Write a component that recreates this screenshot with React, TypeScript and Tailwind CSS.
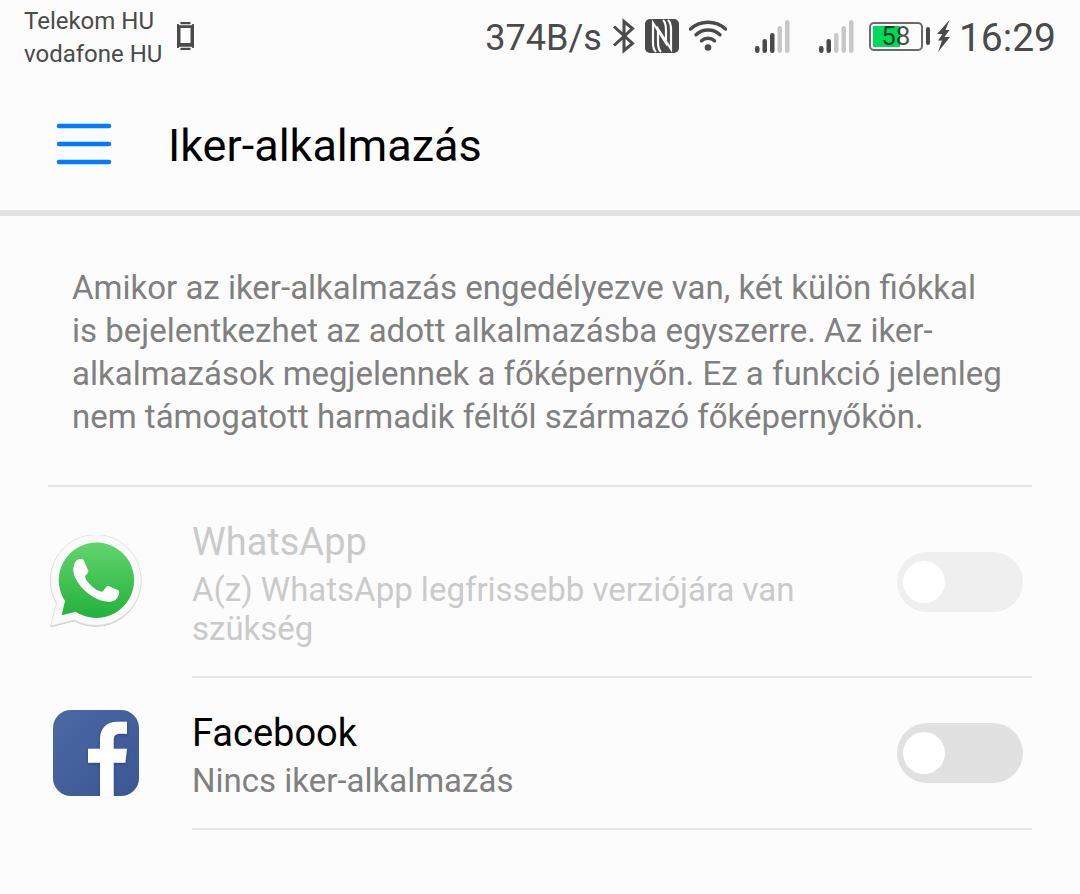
import React, { useState } from "react";

interface TwinApp {
  id: string;
  name: string;
  status: string;
  available: boolean;
  icon: React.ReactNode;
}

function PhoneIcon() {
  return (
    <svg width="17" height="28" viewBox="0 0 17 28" fill="#4a4a4a">
      <path d="M3.500 0h10v2.300h-10zM3.500 25.700h10V28h-10z" />
      <path
        fillRule="evenodd"
        d="M0 2h1.500l1 1.200h12l1-1.200H17v24h-1.500l-1-1.200h-12L1.500 26H0zM3.500 6v15h10V6z"
      />
    </svg>
  );
}

function BluetoothIcon() {
  return (
    <svg width="24" height="36" viewBox="0 0 24 36" fill="none" stroke="#4a4a4a" strokeWidth="3">
      <path d="M2 8.500l18.500 17-8.500 7V3.500l8.500 7L2 27.500" />
    </svg>
  );
}

function NfcIcon() {
  return (
    <svg width="34" height="34" viewBox="0 0 34 34">
      <rect width="34" height="34" rx="5" fill="#4a4a4a" />
      <g fill="none" stroke="#fcfcfc" strokeWidth="2.200">
        <path d="M11 33C9 31 8 28.500 8 24V4l13 20V11c0-5-.8-8-3-10" />
        <path d="M23 1c2 2 3 4.500 3 9v20L13 10v13c0 5 .8 8 3 10" />
      </g>
    </svg>
  );
}

function WifiIcon() {
  return (
    <svg width="40" height="34" viewBox="0 0 40 34" fill="none" stroke="#4a4a4a" strokeWidth="3.400" strokeLinecap="round">
      <path d="M2.500 10a26 26 0 0 1 35 0" />
      <path d="M8 15.800a17.500 17.500 0 0 1 24 0" />
      <path d="M13.500 21.800a9.500 9.500 0 0 1 13 0" />
      <circle cx="20" cy="28.500" r="3.300" fill="#4a4a4a" stroke="none" />
    </svg>
  );
}

const signalBars = [
  { x: 0, y: 26 },
  { x: 7.5, y: 19 },
  { x: 15, y: 13 },
  { x: 22.5, y: 6 },
  { x: 30, y: 0 },
];

function SignalIcon({ level }: { level: number }) {
  return (
    <svg width="35" height="33" viewBox="0 0 35 33">
      {signalBars.map((bar, i) => (
        <rect
          key={bar.x}
          x={bar.x}
          y={bar.y}
          width="4.500"
          height={33 - bar.y}
          rx="2.200"
          fill={i < level ? "#4a4a4a" : "#c8c8c8"}
        />
      ))}
    </svg>
  );
}

function Battery({ percent }: { percent: number }) {
  return (
    <div className="flex items-center gap-[3px]">
      <div className="relative h-[29px] w-[54px] rounded-[5px] border-2 border-[#6a6a6a] p-[2px]">
        <div className="h-full bg-[#00d95a]" style={{ width: `${percent}%` }} />
        <span className="absolute inset-0 flex items-center justify-center text-[26px] leading-none text-black/70">
          {percent}
        </span>
      </div>
      <div className="h-[18px] w-1 rounded-full bg-[#4a4a4a]" />
    </div>
  );
}

function BoltIcon() {
  return (
    <svg width="13" height="32" viewBox="0 0 13 32" fill="#4a4a4a">
      <path d="M12.500 0L0 14h5.500L1 20.500h4L1 32 13 17H7.500L12.500 10H8.500z" />
    </svg>
  );
}

function WhatsAppIcon() {
  return (
    <svg className="size-24" viewBox="24 45 288 288">
      <defs>
        <linearGradient id="wa-fill" x1="0" y1="0" x2="0" y2="1">
          <stop offset="0" stopColor="#63d46e" />
          <stop offset="1" stopColor="#23b13c" />
        </linearGradient>
        <filter id="wa-shadow" x="-10%" y="-10%" width="120%" height="120%">
          <feDropShadow dx="0" dy="2" stdDeviation="2" floodColor="#000" floodOpacity="0.35" />
        </filter>
      </defs>
      <path
        d="M32 318L50 249A136 136 0 1 1 103 300Z"
        fill="#fafafa"
        stroke="#d4d4d4"
        strokeWidth="1.500"
        filter="url(#wa-shadow)"
      />
      <path d="M65 286L75 243A113 113 0 1 1 107 275Z" fill="url(#wa-fill)" />
      <path
        d="M110 121c5-5 18-5 21-1l14 32c2 5-10 14-10 18 3 14 30 42 50 45 6 0 13-18 19-18l31 14c7 5-1 23-8 28-18 12-43 5-67-8-30-17-57-50-60-77-1-12 3-26 10-33z"
        fill="#fff"
      />
    </svg>
  );
}

function FacebookIcon() {
  return (
    <svg className="size-24" viewBox="24 33 288 288">
      <defs>
        <linearGradient id="fb-fill" x1="0" y1="0" x2="1" y2="1">
          <stop offset="0" stopColor="#4c69a4" />
          <stop offset="1" stopColor="#3a5795" />
        </linearGradient>
        <clipPath id="fb-clip">
          <rect x="39" y="45" width="258" height="258" rx="54" />
        </clipPath>
        <filter id="fb-shadow" x="-20%" y="-20%" width="140%" height="140%">
          <feDropShadow dx="0" dy="4" stdDeviation="4" floodColor="#1d3468" floodOpacity="0.6" />
        </filter>
      </defs>
      <g clipPath="url(#fb-clip)">
        <rect x="39" y="45" width="258" height="258" fill="url(#fb-fill)" />
        <path
          d="M180 310V203h-36v-42h36v-27c0-35 20-54 51-54h30v36h-21c-15 0-19 8-19 20v25h40l-5 42h-35v107z"
          fill="#fff"
          filter="url(#fb-shadow)"
        />
      </g>
    </svg>
  );
}

const apps: TwinApp[] = [
  {
    id: "whatsapp",
    name: "WhatsApp",
    status: "A(z) WhatsApp legfrissebb verziójára van szükség",
    available: false,
    icon: <WhatsAppIcon />,
  },
  {
    id: "facebook",
    name: "Facebook",
    status: "Nincs iker-alkalmazás",
    available: true,
    icon: <FacebookIcon />,
  },
];

function StatusBar() {
  return (
    <div className="flex h-[72px] items-center justify-between px-6 text-[#4a4a4a]">
      <div className="flex items-center gap-[15px]">
        <div className="pt-1 text-[24px] leading-[33px]">
          <p>Telekom HU</p>
          <p>vodafone HU</p>
        </div>
        <PhoneIcon />
      </div>

      <div className="flex items-center">
        <span className="mr-2.5 pt-1 text-[36px] leading-none">374B/s</span>
        <div className="mr-[27px] flex items-center gap-[9px]">
          <BluetoothIcon />
          <NfcIcon />
          <WifiIcon />
        </div>
        <div className="mr-[15px] flex items-center gap-[29px]">
          <SignalIcon level={3} />
          <SignalIcon level={2} />
        </div>
        <div className="flex items-center gap-[7px]">
          <Battery percent={58} />
          <BoltIcon />
        </div>
        <span className="ml-[9px] pt-1 text-[39px] leading-none">16:29</span>
      </div>
    </div>
  );
}

export default function App() {
  const [enabled, setEnabled] = useState<Record<string, boolean>>({});

  function toggle(id: string) {
    setEnabled((prev) => ({ ...prev, [id]: !prev[id] }));
  }

  return (
    <div className="min-h-screen bg-[#fcfcfc] font-[Roboto,sans-serif]">
      <StatusBar />

      <header className="flex h-36 items-center gap-14 border-b-6 border-[#e1e1e1] px-14 pt-1.5">
        <button type="button" aria-label="Menü">
          <svg width="56" height="42" viewBox="0 0 56 42" stroke="#007dff" strokeWidth="4.500" strokeLinecap="round">
            <path d="M3 3h50M3 21h50M3 39h50" />
          </svg>
        </button>
        <h1 className="pt-1 text-[45px] leading-[54px] text-black">Iker-alkalmazás</h1>
      </header>

      <main className="px-12">
        <p className="border-b-2 border-[#e5e5e5] px-6 pt-[50px] pb-[47px] text-[33px] leading-[43px] text-[#808080]">
          Amikor az iker-alkalmazás engedélyezve van, két külön fiókkal is
          bejelentkezhet az adott alkalmazásba egyszerre. Az iker-alkalmazások
          megjelennek a főképernyőn. Ez a funkció jelenleg nem támogatott
          harmadik féltől származó főképernyőkön.
        </p>

        <ul>
          {apps.map((app) => (
            <li key={app.id} className="flex items-center gap-12">
              <div className="shrink-0">{app.icon}</div>
              <div className="flex flex-1 items-center justify-between gap-12 border-b-2 border-[#e5e5e5] py-7 pr-[9px]">
                <label htmlFor={app.id} className="max-w-[640px] pt-[3px]">
                  <span
                    className={`block text-[38px] leading-[48px] ${
                      app.available ? "text-black" : "text-[#cacaca]"
                    }`}
                  >
                    {app.name}
                  </span>
                  <span
                    className={`mt-1 block text-[33px] leading-[39px] ${
                      app.available ? "text-[#808080]" : "text-[#cacaca]"
                    }`}
                  >
                    {app.status}
                  </span>
                </label>
                <input
                  id={app.id}
                  type="checkbox"
                  role="switch"
                  disabled={!app.available}
                  checked={!!enabled[app.id]}
                  onChange={() => toggle(app.id)}
                  className="flex h-[60px] w-[126px] shrink-0 appearance-none items-center rounded-full bg-[#e1e1e1] px-1.5 before:size-[42px] before:rounded-full before:bg-white checked:justify-end checked:bg-[#007dff] disabled:bg-[#efefef]"
                />
              </div>
            </li>
          ))}
        </ul>
      </main>
    </div>
  );
}
